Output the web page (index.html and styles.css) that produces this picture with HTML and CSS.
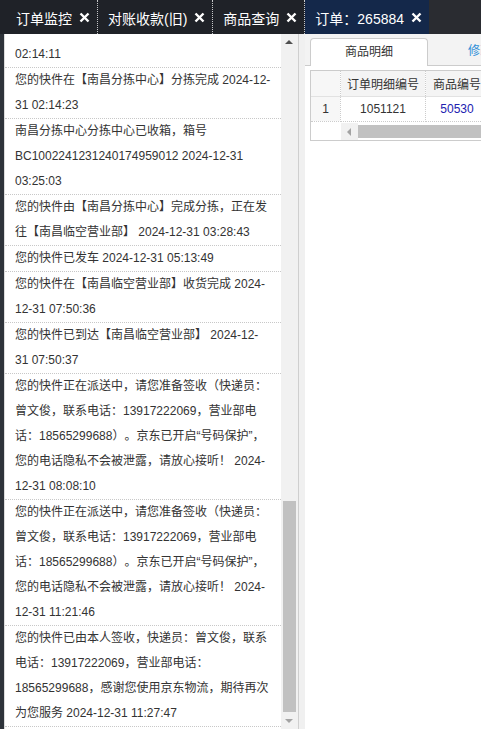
FILE: index.html
```html
<!DOCTYPE html>
<html lang="zh-CN">
<head>
    <meta charset="UTF-8">
    <meta name="viewport" content="width=device-width, initial-scale=1.0">
    <title>订单：265884</title>
    <link rel="stylesheet" href="styles.css">
</head>
<body>
    <div class="tabbar">
        <div class="tab"><span>订单监控</span><svg class="close" viewBox="0 0 11 11"><path d="M1.5 1.5L9.5 9.5M9.5 1.5L1.5 9.5"/></svg></div>
        <div class="tab"><span>对账收款(旧)</span><svg class="close" viewBox="0 0 11 11"><path d="M1.5 1.5L9.5 9.5M9.5 1.5L1.5 9.5"/></svg></div>
        <div class="tab"><span>商品查询</span><svg class="close" viewBox="0 0 11 11"><path d="M1.5 1.5L9.5 9.5M9.5 1.5L1.5 9.5"/></svg></div>
        <div class="tab active"><span>订单：265884</span><svg class="close" viewBox="0 0 11 11"><path d="M1.5 1.5L9.5 9.5M9.5 1.5L1.5 9.5"/></svg></div>
        <div class="tabfill"></div>
    </div>

    <div class="main">
        <div class="strip"></div>

        <div class="track-panel">
            <div class="list">
                <div class="items">
                    <div class="item">您的快件已到达【南昌分拣中心】 2024-12-31 02:14:11</div>
                    <div class="item">您的快件在【南昌分拣中心】分拣完成 2024-12-31 02:14:23</div>
                    <div class="item">南昌分拣中心分拣中心已收箱，箱号BC1002241231240174959012 2024-12-31 03:25:03</div>
                    <div class="item">您的快件由【南昌分拣中心】完成分拣，正在发往【南昌临空营业部】 2024-12-31 03:28:43</div>
                    <div class="item">您的快件已发车 2024-12-31 05:13:49</div>
                    <div class="item">您的快件在【南昌临空营业部】收货完成 2024-12-31 07:50:36</div>
                    <div class="item">您的快件已到达【南昌临空营业部】 2024-12-31 07:50:37</div>
                    <div class="item">您的快件正在派送中，请您准备签收（快递员：曾文俊，联系电话：13917222069，营业部电话：18565299688）。京东已开启“号码保护”，您的电话隐私不会被泄露，请放心接听！ 2024-12-31 08:08:10</div>
                    <div class="item">您的快件正在派送中，请您准备签收（快递员：曾文俊，联系电话：13917222069，营业部电话：18565299688）。京东已开启“号码保护”，您的电话隐私不会被泄露，请放心接听！ 2024-12-31 11:21:46</div>
                    <div class="item">您的快件已由本人签收，快递员：曾文俊，联系电话：13917222069，营业部电话：18565299688，感谢您使用京东物流，期待再次为您服务 2024-12-31 11:27:47</div>
                </div>
            </div>
            <div class="vscroll">
                <div class="arrow up"></div>
                <div class="vtrack"><div class="vthumb"></div></div>
                <div class="arrow down"></div>
            </div>
        </div>

        <div class="gap"></div>

        <div class="detail">
            <div class="dtabs">
                <div class="dtab selected">商品明细</div>
                <div class="dtab">修改记录</div>
            </div>
            <div class="grid">
                <table>
                    <tr class="head">
                        <td class="num"></td>
                        <td class="c1">订单明细编号</td>
                        <td class="c2">商品编号</td>
                        <td class="c3">商品名称</td>
                    </tr>
                    <tr>
                        <td class="num">1</td>
                        <td class="c1">1051121</td>
                        <td class="c2 link">50530</td>
                        <td class="c3"></td>
                    </tr>
                </table>
                <div class="hscroll">
                    <div class="hblank"></div>
                    <div class="harrow"></div>
                    <div class="hthumb"></div>
                </div>
            </div>
        </div>
    </div>
</body>
</html>
```

FILE: styles.css
```css
body {
    margin: 0;
    width: 481px;
    height: 729px;
    overflow: hidden;
    font-family: "Liberation Sans", "Noto Sans CJK SC", sans-serif;
    text-spacing-trim: space-all;
    background: #fff;
}
.tabbar {
    display: flex;
    height: 34px;
    background: #1f2228;
    padding-left: 6px;
}
.tab {
    display: flex;
    align-items: center;
    gap: 7px;
    padding: 1px 7px 0 10px;
    color: #fff;
    font-size: 14px;
    white-space: nowrap;
    border-right: 1px dotted rgba(255, 255, 255, 0.75);
}
.tab.active {
    background: #14284a;
    border-right: none;
}
.close {
    width: 11px;
    height: 11px;
    fill: none;
    stroke: #fff;
    stroke-width: 2.4;
}
.tabfill {
    flex: 1;
    background: #2a2c31;
}
.main {
    display: flex;
    height: 695px;
}
.strip {
    width: 4px;
    background: #2e333a;
}
.track-panel {
    display: flex;
    width: 293px;
    border-left: 1px solid #dcdcdc;
    border-right: 1px solid #cfcfcf;
    background: #fff;
}
.list {
    width: 276px;
    overflow: hidden;
}
.items {
    margin-top: -17px;
}
.item {
    padding: 0 10px;
    font-size: 12px;
    line-height: 25px;
    color: #333;
    border-bottom: 1px dotted #c8c8c8;
}
.vscroll {
    width: 17px;
    display: flex;
    flex-direction: column;
    background: #f1f1f1;
}
.arrow {
    height: 17px;
    position: relative;
}
.arrow::after {
    content: "";
    position: absolute;
    left: 4px;
    border-left: 4px solid transparent;
    border-right: 4px solid transparent;
}
.arrow.up::after {
    top: 6px;
    border-bottom: 4px solid #505050;
}
.arrow.down::after {
    top: 7px;
    border-top: 4px solid #a3a3a3;
}
.vtrack {
    flex: 1;
    display: flex;
    flex-direction: column;
    justify-content: flex-end;
}
.vthumb {
    height: 211px;
    margin: 0 2px;
    background: #c1c1c1;
}
.gap {
    width: 6px;
    background: #f0f0f0;
}
.detail {
    flex: 1;
    overflow: hidden;
    background: #fff;
}
.dtabs {
    display: flex;
    align-items: flex-end;
    height: 31px;
    padding-left: 5px;
    background: #f3f3f3;
    border-bottom: 1px solid #ccc;
}
.dtab {
    flex-shrink: 0;
    height: 27px;
    line-height: 27px;
    font-size: 12px;
    white-space: nowrap;
    color: #2f8fd8;
    padding: 0 0 0 40px;
}
.dtab.selected {
    width: 116px;
    padding: 0;
    margin-bottom: -1px;
    text-align: center;
    color: #333;
    background: #fff;
    border: 1px solid #ccc;
    border-bottom: none;
    border-radius: 4px 4px 0 0;
}
.grid {
    width: 300px;
    margin: 4px 0 0 5px;
    border: 1px solid #ccc;
}
table {
    border-collapse: collapse;
    table-layout: fixed;
    width: 300px;
    font-size: 12px;
    color: #333;
}
td {
    text-align: center;
    white-space: nowrap;
    overflow: hidden;
    border-right: 1px dotted #ccc;
    border-bottom: 1px dotted #ccc;
    padding: 0;
    height: 24px;
}
.head td {
    height: 25px;
    background: #f4f4f4;
    border-bottom: 1px solid #e2e2e2;
}
td.num {
    width: 29px;
    background: #f7f7f7;
}
td.c1 {
    width: 84px;
}
td.c2 {
    width: 62px;
}
.link {
    color: #2121b0;
}
.hscroll {
    display: flex;
    height: 17px;
    padding-top: 1px;
}
.hblank {
    width: 30px;
}
.harrow {
    width: 17px;
    background: #f1f1f1;
    position: relative;
}
.harrow::after {
    content: "";
    position: absolute;
    left: 6px;
    top: 5px;
    border-top: 4px solid transparent;
    border-bottom: 4px solid transparent;
    border-right: 4px solid #a3a3a3;
}
.hthumb {
    flex: 1;
    margin: 2px 0;
    background: #c1c1c1;
}
```
